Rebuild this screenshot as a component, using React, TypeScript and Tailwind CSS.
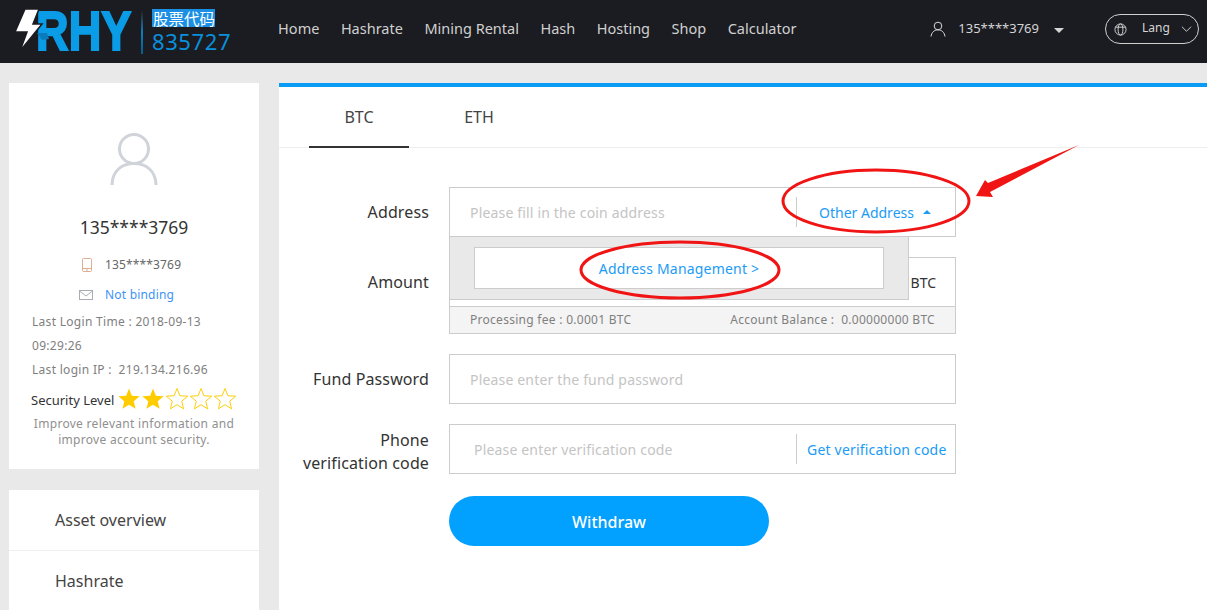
import { Fragment } from "react";

const navLinks = ["Home", "Hashrate", "Mining Rental", "Hash", "Hosting", "Shop", "Calculator"];

function Star({ filled }: { filled: boolean }) {
  return (
    <svg viewBox="0 0 24 24" className="-mt-[3px] h-[23px] w-[24px] shrink-0">
      <path
        d="M12 1.5l3 7.6 8.2.5-6.3 5.2 2 8-6.9-4.4-6.9 4.4 2-8L.8 9.6 9 9.1z"
        fill={filled ? "#ffcc00" : "#fff"}
        stroke="#ffcc00"
        strokeWidth={filled ? 0 : 1}
        strokeLinejoin="round"
      />
    </svg>
  );
}

function Logo() {
  return (
    <div className="flex h-full items-center">
      <svg viewBox="0 0 141 63" className="h-[63px] w-[141px] shrink-0">
        <g transform="scale(0.82 1)">
          <text
            x="44"
            y="49.5"
            fontFamily="'Liberation Sans', sans-serif"
            fontSize="55"
            fontWeight="700"
            fill="#0a9ce6"
            stroke="#0a9ce6"
            strokeWidth="2"
          >
            RHY
          </text>
        </g>
        <path d="M37 33h10l2 6-7 1z" fill="#0b7cbb" />
        <path d="M25 9h14l-6 15h9L20 51l7-19H15z" fill="#fff" stroke="#1b1c21" strokeWidth="1.5" />
      </svg>
      <div className="h-[44px] w-[2px] shrink-0 bg-gradient-to-b from-[#1b1c21] via-[#0a7fc0] to-[#0b5c8a]" />
      <div className="ml-[9px] flex flex-col items-start">
        <span className="bg-[#1a8fe3] pl-[1px] font-['Noto_Sans_CJK_SC'] text-[15.5px] leading-[18px] text-white">
          股票代码
        </span>
        <span className="mt-[1px] text-[22px] leading-[26px] tracking-[0.6px] text-[#0a8fdc]">835727</span>
      </div>
    </div>
  );
}

function Header() {
  return (
    <header className="flex h-[63px] items-center bg-[#1b1c21]">
      <Logo />
      <nav className="mb-[5px] ml-[47px] flex gap-[21.5px] text-[14.5px] text-[#d0d0d0]">
        {navLinks.map((link) => (
          <span key={link}>{link}</span>
        ))}
      </nav>
      <div className="mb-[5px] ml-auto flex items-center text-[#d5d5d5]">
        <svg viewBox="0 0 16 16" fill="none" stroke="#d8d8d8" strokeWidth="1" className="h-[16px] w-[16px]">
          <circle cx="8" cy="5" r="3.8" />
          <path d="M1 15.5c.6-4 3-6.6 7-6.6s6.4 2.6 7 6.6" />
        </svg>
        <span className="ml-[12px] text-[13px]">135****3769</span>
        <span className="ml-[15px] mt-[3px] h-0 w-0 border-x-[5px] border-t-[5px] border-x-transparent border-t-[#d5d5d5]" />
        <div className="ml-[41px] mr-[8px] flex h-[30px] w-[94px] items-center rounded-full border border-[#d0d0d0] pl-[8px]">
          <svg viewBox="0 0 14 14" fill="none" stroke="#d8d8d8" strokeWidth="1" className="h-[13px] w-[13px]">
            <circle cx="7" cy="7" r="6" />
            <ellipse cx="7" cy="7" rx="2.6" ry="6" />
            <path d="M1.5 4.5h11" />
          </svg>
          <span className="mb-[2px] ml-[15px] text-[12px]">Lang</span>
          <svg viewBox="0 0 12 8" fill="none" stroke="#d8d8d8" strokeWidth="1" className="ml-[11px] h-[8px] w-[11px]">
            <path d="M1 1.5l5 5 5-5" />
          </svg>
        </div>
      </div>
    </header>
  );
}

function Sidebar() {
  return (
    <aside className="ml-[9px] flex w-[250px] shrink-0 flex-col gap-[21px]">
      <section className="flex h-[386px] shrink-0 flex-col bg-white px-[23px] pt-[50px]">
        <svg viewBox="0 0 50 52" fill="none" stroke="#d0d3d9" strokeWidth="3" className="mx-auto h-[52px] w-[50px]">
          <circle cx="25" cy="16" r="14.5" />
          <path d="M3 52C3 38 13 30.5 25 30.5S47 38 47 52" />
        </svg>
        <div className="mt-[29px] text-center text-[17.5px] leading-[26px] text-[#333]">135****3769</div>
        <div className="mt-[13px] flex h-[24px] items-center text-[12px] text-[#666]">
          <svg viewBox="0 0 10 14" fill="none" stroke="#dcae92" strokeWidth="1" className="ml-[50px] h-[14px] w-[10px]">
            <rect x="0.5" y="0.5" width="9" height="13" rx="1" />
            <path d="M0.5 10.5h9M5 11v2" />
          </svg>
          <span className="ml-[13px] tracking-[0.15px]">135****3769</span>
        </div>
        <div className="mt-[6px] flex h-[24px] items-center text-[12px] text-[#3d93f5]">
          <svg viewBox="0 0 14 10" fill="none" stroke="#a9acb5" strokeWidth="1" className="ml-[47px] h-[10px] w-[14px]">
            <rect x="0.5" y="0.5" width="13" height="9" />
            <path d="M0.5 1l6.5 5 6.5-5" />
          </svg>
          <span className="ml-[12px] tracking-[0.2px]">Not binding</span>
        </div>
        <div className="mt-[3px] text-[12px] leading-[24px] tracking-[0.3px] text-[#808080]">
          Last Login Time : 2018-09-13
          <br />
          09:29:26
          <br />
          Last login IP :&nbsp;&nbsp;219.134.216.96
        </div>
        <div className="mt-[6px] flex h-[24px] items-center text-[#333]">
          <span className="mr-[3px] -ml-[1px] mt-[1px] shrink-0 whitespace-nowrap text-[13px]">Security Level</span>
          {[true, true, false, false, false].map((filled, i) => (
            <Star key={i} filled={filled} />
          ))}
        </div>
        <p className="mt-[4px] text-center text-[12px] leading-[16px] tracking-[0.3px] text-[#909090]">
          Improve relevant information and improve account security.
        </p>
      </section>
      <section className="min-h-0 flex-1 bg-white text-[16px] text-[#444]">
        <div className="flex h-[61px] items-center border-b border-[#eee] pl-[46px]">Asset overview</div>
        <div className="flex h-[59px] items-center pl-[46px]">Hashrate</div>
      </section>
    </aside>
  );
}

function Field({ label, children }: { label: React.ReactNode; children: React.ReactNode }) {
  return (
    <div className="flex">
      <div className="flex h-[50px] w-[150px] shrink-0 items-center justify-end text-right text-[16px] leading-[23px] tracking-[0.12px] text-[#333]">
        {label}
      </div>
      <div className="ml-[20px] w-[507px]">{children}</div>
    </div>
  );
}

function WithdrawForm() {
  return (
    <div className="mt-[39px] flex flex-col gap-[20px]">
      <Field label="Address">
        <div className="relative">
          <div className="flex h-[50px] items-center border border-[#ccc] pl-[20px] text-[14px]">
            <span className="w-[326px] tracking-[0.17px] text-[#c4c4c4]">Please fill in the coin address</span>
            <div className="h-[30px] w-px bg-[#ccc]" />
            <span className="ml-[22px] text-[#1a9bf5]">Other Address</span>
            <span className="ml-[9px] h-0 w-0 border-x-[4px] border-b-[4px] border-x-transparent border-b-[#1a9bf5]" />
          </div>
          <div className="absolute left-0 top-[49px] z-10 h-[64px] w-[460px] border border-[#ccc] bg-[#e9e9e9] px-[24px] pt-[10px]">
            <div className="flex h-[42px] w-[410px] items-center justify-center border border-[#ccc] bg-white text-[14px] tracking-[0.2px] text-[#1a9bf5]">
              Address Management &gt;
            </div>
          </div>
        </div>
      </Field>
      <Field label="Amount">
        <div className="flex h-[50px] items-center justify-end border border-[#ccc] pr-[19px] text-[14px] text-[#333]">BTC</div>
        <div className="flex h-[27px] items-center justify-between border border-t-0 border-[#ccc] bg-[#f4f4f4] px-[20px] text-[12px] tracking-[0.28px] text-[#808080]">
          <span>Processing fee : 0.0001 BTC</span>
          <span>Account Balance :&nbsp;&nbsp;0.00000000 BTC</span>
        </div>
      </Field>
      <Field label="Fund Password">
        <div className="flex h-[50px] items-center border border-[#ccc] pl-[20px] text-[14px] tracking-[0.17px] text-[#c4c4c4]">
          Please enter the fund password
        </div>
      </Field>
      <Field
        label={
          <Fragment>
            <span className="pt-[6px]">
              Phone
              <br />
              verification code
            </span>
          </Fragment>
        }
      >
        <div className="flex h-[50px] items-center border border-[#ccc] pl-[24px] text-[14px]">
          <span className="w-[322px] tracking-[0.17px] text-[#c4c4c4]">Please enter verification code</span>
          <div className="h-[30px] w-px bg-[#ccc]" />
          <span className="ml-[10px] tracking-[0.2px] text-[#1a9bf5]">Get verification code</span>
        </div>
      </Field>
      <button type="button" className="ml-[170px] mt-[2px] h-[50px] w-[320px] rounded-full bg-[#02a0ff] pt-[2px] text-[16px] font-medium text-white">
        Withdraw
      </button>
    </div>
  );
}

function Annotations() {
  return (
    <svg viewBox="0 0 1207 610" fill="none" className="pointer-events-none absolute left-0 top-0 z-20 h-[610px] w-[1207px]">
      <ellipse cx="876" cy="201" rx="93" ry="31" stroke="#f01414" strokeWidth="3" />
      <ellipse cx="680" cy="270" rx="99" ry="28" stroke="#f01414" strokeWidth="3" />
      <path d="M1079 145L988 183l-3-3-9 16 17 1-3-5z" fill="#f01414" />
    </svg>
  );
}

export default function App() {
  return (
    <div className="relative h-[610px] w-[1207px] overflow-hidden bg-[#e9e9e9] font-['Noto_Sans','Liberation_Sans',sans-serif]">
      <Header />
      <div className="flex h-[547px] gap-[20px] pt-[20px]">
        <Sidebar />
        <main className="flex-1 border-t-4 border-[#0a9cf5] bg-white">
          <div className="flex h-[61px] gap-[20px] border-b border-[#eee] pl-[30px] text-[16px] text-[#444]">
            <div className="flex h-[61px] w-[100px] items-center justify-center border-b-2 border-[#333]">BTC</div>
            <div className="flex h-[60px] w-[100px] items-center justify-center">ETH</div>
          </div>
          <WithdrawForm />
        </main>
      </div>
      <Annotations />
    </div>
  );
}
